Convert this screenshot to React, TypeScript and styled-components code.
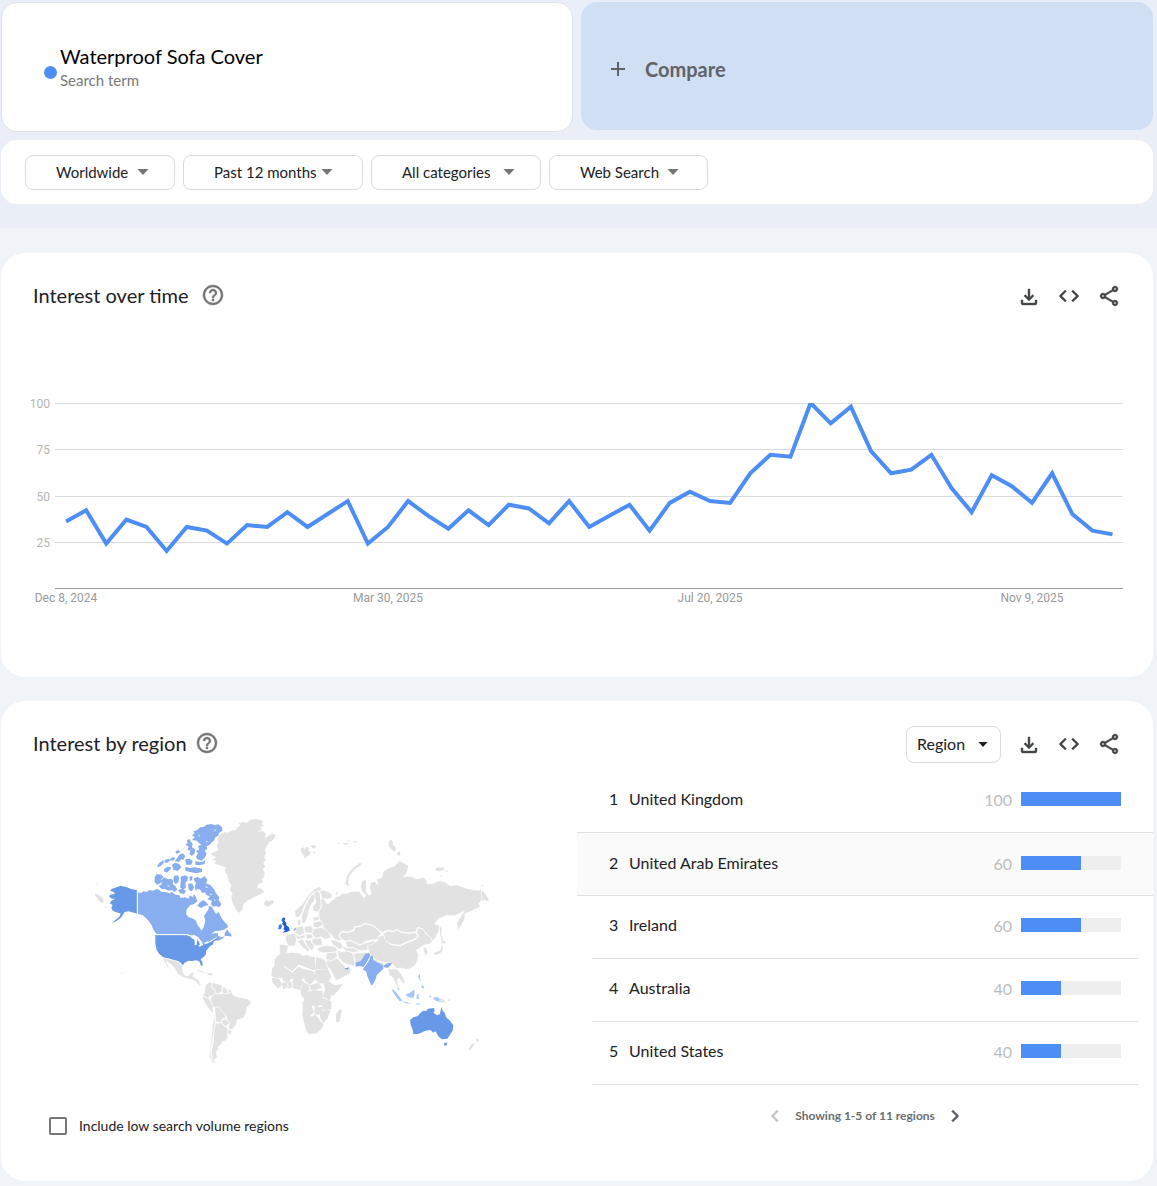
import React from "react";
import styled, { createGlobalStyle } from "styled-components";
import { MdAdd, MdHelpOutline, MdCode, MdOutlineShare, MdChevronLeft, MdChevronRight } from "react-icons/md";

const GlobalStyle = createGlobalStyle`
  * { box-sizing: border-box; }
  body {
    margin: 0;
    background: #f0f3f8;
    color: #202124;
    font-family: Lato, "Open Sans", sans-serif;
    font-size: 16px;
  }
  button, select, input { font: inherit; color: inherit; }
`;

const TopBand = styled.header`
  background: #e9eef7;
  padding: 2px 4px 24px 1px;
`;

const Terms = styled.div`
  display: grid;
  grid-template-columns: 1fr 1fr;
  gap: 8px;
  align-items: start;
`;

const TermCard = styled.section`
  display: flex;
  align-items: center;
  gap: 3px;
  height: 130px;
  padding: 2px 42px 0;
  background: #fff;
  border: 1px solid #dfe3ea;
  border-radius: 16px;
`;

const TermDot = styled.span`
  width: 13px;
  height: 13px;
  margin-top: 8px;
  border-radius: 50%;
  background: #4c8df6;
`;

const TermName = styled.h1`
  margin: 0;
  color: #000;
  font-size: 20px;
  font-weight: 400;
  line-height: 24px;
`;

const TermKind = styled.p`
  margin: 0;
  color: #77797c;
  font-size: 15px;
  line-height: 24px;
`;

const CompareButton = styled.button`
  display: flex;
  align-items: center;
  gap: 15px;
  height: 128px;
  padding: 6px 25px 0;
  border: 0;
  border-radius: 16px;
  background: #d1dff5;
  color: #5f6368;
  font-size: 20px;
  font-weight: 700;
`;

const FilterBar = styled.nav`
  display: flex;
  flex-wrap: wrap;
  align-items: center;
  gap: 8px;
  min-height: 64px;
  margin-top: 8px;
  padding: 0 24px;
  background: #fff;
  border-radius: 16px;
`;

const SelectBox = styled.label<{ $width: number; $pad: number; $height: number; $gap: number }>`
  display: flex;
  align-items: center;
  gap: ${(p) => p.$gap}px;
  width: ${(p) => p.$width}px;
  height: ${(p) => p.$height}px;
  padding-left: ${(p) => p.$pad}px;
  border: 1px solid #dadce0;
  border-radius: 8px;
  background: #fff;
`;

const SelectField = styled.select<{ $size: number }>`
  appearance: none;
  padding: 0;
  border: 0;
  background: transparent;
  font-size: ${(p) => p.$size}px;
  line-height: 20px;
  cursor: pointer;
`;

const Main = styled.main`
  display: flex;
  flex-direction: column;
  gap: 24px;
  padding: 25px 4px 5px 1px;
`;

const Card = styled.section`
  background: #fff;
  border-radius: 24px;
  padding: 24px 0 45px;
`;

const CardHeader = styled.div`
  display: flex;
  align-items: center;
  justify-content: space-between;
  height: 38px;
  padding: 0 32px;
`;

const Heading = styled.div<{ $gap: number }>`
  display: flex;
  align-items: center;
  gap: ${(p) => p.$gap}px;
  padding-bottom: 2px;
`;

const CardTitle = styled.h2`
  margin: 0;
  font-size: 20px;
  font-weight: 400;
  line-height: 24px;
`;

const Actions = styled.div`
  display: flex;
  align-items: center;
  gap: 16px;
`;

const IconButton = styled.button<{ $color?: string }>`
  display: flex;
  padding: 0;
  border: 0;
  background: none;
  color: ${(p) => p.$color ?? "#444746"};
  cursor: pointer;
  path:not([fill="none"]) {
    stroke: currentColor;
    stroke-width: 0.4px;
  }
`;

const ChartSvg = styled.svg`
  display: block;
  width: 100%;
  height: auto;
  font-family: Roboto, sans-serif;
  font-size: 12px;
`;

const RegionBody = styled.div`
  display: grid;
  grid-template-columns: 1fr 1fr;
`;

const MapColumn = styled.div`
  padding: 47px 48px 0;
`;

const MapSvg = styled.svg`
  display: block;
  width: 410px;
  max-width: 100%;
  height: auto;
  margin: 0 auto 46px 41px;
`;

const CheckLabel = styled.label`
  display: flex;
  align-items: center;
  gap: 12px;
  font-size: 14px;
  line-height: 20px;
`;

const CheckInput = styled.input`
  appearance: none;
  width: 18px;
  height: 18px;
  margin: 0;
  border: 2px solid #747775;
  border-radius: 2px;
`;

const RankList = styled.ol`
  margin: 7px 0 0;
  padding: 0;
  list-style: none;
`;

const RankRow = styled.li<{ $active: boolean }>`
  display: grid;
  grid-template-columns: 20px 1fr 40px 100px;
  align-items: center;
  height: 63px;
  margin: ${(p) => (p.$active ? "0" : "0 15px")};
  padding: ${(p) => (p.$active ? "0 32px 2px" : "0 17px 4px")};
  border-bottom: 1px solid #e0e0e0;
  background: ${(p) => (p.$active ? "#fafafa" : "transparent")};
  &:first-child {
    margin: 0;
    padding: 0 32px 4px;
  }
`;

const RankText = styled.span`
  padding-bottom: 2px;
`;

const Score = styled.span`
  padding-right: 9px;
  color: #bdbdbd;
  text-align: right;
`;

const Track = styled.div`
  height: 14px;
  background: #eee;
`;

const Fill = styled.div`
  height: 100%;
  background: #4c8df6;
`;

const Pager = styled.div`
  display: flex;
  align-items: center;
  justify-content: center;
  gap: 8px;
  margin-top: 19px;
  color: #6b6d70;
  font-size: 12px;
  font-weight: 700;
  line-height: 24px;
`;

const Caret = ({ color, width = 12 }: { color: string; width?: number }) => (
  <svg width={width} height={width / 2} viewBox="0 0 12 6" fill={color} aria-hidden="true">
    <path d="M0.5 0h11L6 6z" />
  </svg>
);

const DownloadIcon = () => (
  <svg width="24" height="24" viewBox="0 0 24 24" fill="currentColor" aria-hidden="true">
    <path d="M12 17l-5-5 1.4-1.45 2.6 2.6V5h2v8.15l2.6-2.6L17 12zM6 21q-.825 0-1.412-.587T4 19v-3h2v3h12v-3h2v3q0 .825-.587 1.413T18 21z" />
  </svg>
);

const CardActions = () => (
  <>
    <IconButton aria-label="Download CSV"><DownloadIcon /></IconButton>
    <IconButton aria-label="Embed"><MdCode size={24} /></IconButton>
    <IconButton aria-label="Share"><MdOutlineShare size={24} /></IconButton>
  </>
);

const filters = [
  { label: "Location", value: "Worldwide", width: 150, gap: 8 },
  { label: "Time range", value: "Past 12 months", width: 180, gap: 4 },
  { label: "Category", value: "All categories", width: 170, gap: 12 },
  { label: "Search type", value: "Web Search", width: 159, gap: 8 },
];

const values = [
  36, 42, 24, 37, 33, 20, 33, 31, 24, 34, 33, 41, 33, 40, 47, 24, 33, 47, 39, 32, 42, 34, 45, 43, 35, 47, 33, 39, 45,
  31, 46, 52, 47, 46, 62, 72, 71, 100, 89, 98, 74, 62, 64, 72, 54, 41, 61, 55, 46, 62, 40, 31, 29,
];

const dates = ["Dec 8, 2024", "Mar 30, 2025", "Jul 20, 2025", "Nov 9, 2025"];

const yFor = (v: number) => 228 - v * 1.85;
const xFor = (i: number) => 65 + i * 20.125;

const TrendChart = () => (
  <ChartSvg viewBox="0 0 1152 317" role="img" aria-label="Interest over time">
    <defs>
      <clipPath id="plot"><rect x="54" y="43" width="1068" height="185" /></clipPath>
    </defs>
    {[100, 75, 50, 25].map((v) => (
      <g key={v}>
        <rect x="54" y={Math.round(yFor(v))} width="1068" height="1" transform="translate(0 45)" fill="#dadce0" />
        <text x="49" y={yFor(v) + 50} textAnchor="end" fill="#b5b5b5">{v}</text>
      </g>
    ))}
    <rect x="54" y="273" width="1068" height="1" fill="#9a9a9a" />
    <g transform="translate(0 45)">
      <polyline
        clipPath="url(#plot)"
        points={values.map((v, i) => `${xFor(i)},${yFor(v)}`).join(" ")}
        fill="none"
        stroke="#4c8df6"
        strokeWidth="4"
      />
    </g>
    {dates.map((d, i) => (
      <text key={d} x={xFor(i * 16)} y="287" textAnchor="middle" fill="#999">{d}</text>
    ))}
  </ChartSvg>
);

const WorldMap = () => (
  <MapSvg viewBox="0 0 1230 780" role="img" aria-label="Interest by region map" strokeLinejoin="round">
    <g fill="#e2e2e2">
      {/* Greenland, Iceland */}
      <path d="M362 132L385 120 380 108 386 96 382 86 390 74 404 66 412 68 430 60 436 62 444 50 452 48 446 40 460 36 470 38 480 30 496 27 512 30 520 36 512 42 524 46 510 52 518 58 500 64 520 64 528 72 524 84 536 78 546 70 557 76 552 86 544 94 534 96 538 100 530 108 524 120 528 130 522 142 528 150 520 160 526 170 518 178 524 190 522 202 514 208 520 216 506 222 500 232 518 238 522 246 504 256 484 266 470 274 460 284 456 300 448 308 440 302 434 290 428 280 424 262 428 250 420 240 424 226 416 212 412 196 404 184 408 172 396 168 384 164 372 160 380 154 368 150 378 142Z" />
      <path d="M522 278L528 270 536 274 548 270 552 278 542 286 532 290 524 286Z" />
      {/* Aleutians and Pacific specks */}
      <path d="M16 250l8 4 12 8 6 10-6 8-8-6-6-10-6-6zM44 286l6 4-4 3zM94 486l3 2-2 6zM16 222l6 2-4 3z" />
    </g>
    <g fill="#89aef0">
      {/* Canadian mainland */}
      <path d="M143 246L152 250 160 244 170 246 178 240 190 242 200 237 208 240 214 246 228 246 238 250 246 246 256 254 268 256 272 264 286 262 296 266 300 256 308 262 312 252 318 262 322 274 312 282 300 286 290 298 288 312 296 322 310 326 318 332 322 344 330 354 334 362 340 354 344 340 346 330 342 318 350 306 356 296 356 288 366 290 372 302 378 312 386 306 390 314 396 326 404 336 412 344 414 352 400 360 388 362 374 364 362 374 372 370 384 370 384 378 396 382 404 378 398 386 384 392 380 384 368 390 350 398 340 406 330 408 334 398 328 386 314 378 300 376 292 373 200 373 192 362 186 350 180 340 170 326 158 316 143 311Z" />
      <path d="M404 370L412 358 416 366 424 372 424 380 416 378 404 378Z" />
      {/* Ellesmere and Axel Heiberg */}
      <path d="M306 76L314 70 310 64 322 60 330 52 342 50 350 44 364 42 374 45 386 43 396 52 397 62 388 68 384 78 376 82 372 92 364 98 358 106 350 108 352 116 344 122 350 130 346 140 336 152 322 148 318 140 324 130 318 124 328 118 324 108 334 104 326 98 320 92 306 90 314 82Z" />
      <path d="M290 92L298 86 302 94 308 102 306 112 316 118 314 130 306 138 298 132 302 122 292 120 296 110 286 104 294 98Z" />
      {/* Queen Elizabeth and Parry islands */}
      <path d="M256 124L266 120 270 126 260 132ZM268 134L278 130 286 138 280 150 274 148 266 156 254 154 260 146ZM246 142L256 144 250 152 238 150ZM202 168L208 158 220 150 222 158 212 168 204 172ZM224 150L236 146 240 152 232 158 224 158ZM222 178L232 170 244 172 240 180 230 188 222 184ZM246 164L256 158 268 162 274 172 264 182 250 180ZM286 148L300 146 308 154 304 164 288 164ZM286 170L300 174 314 172 336 176 336 186 318 190 300 186 286 182ZM316 154L336 156 346 150 344 162 328 166 316 164Z" />
      {/* Banks, Victoria and neighbours */}
      <path d="M194 202L200 192 214 194 220 200 214 208 212 220 200 224 194 216Z" />
      <path d="M212 212L222 202 234 208 244 206 250 214 248 222 256 228 262 238 254 246 246 240 236 242 226 238 214 236 206 228 216 222Z" />
      <path d="M252 198L264 196 268 206 264 218 256 222 250 212ZM272 200L284 196 294 200 292 212 286 218 288 232 280 240 270 232 272 218ZM264 240L276 236 288 242 282 252 270 250ZM298 200L308 198 306 210 300 214ZM294 222L306 220 312 232 306 244 296 240Z" />
      {/* Baffin, Southampton */}
      <path d="M310 206L322 200 332 206 344 198 352 210 348 220 362 226 372 238 378 250 388 262 386 270 394 282 388 292 378 288 370 290 362 282 366 272 352 268 360 260 348 254 344 246 336 250 332 240 322 236 318 244 314 230 318 220Z" />
      <path d="M328 278L340 270 350 278 356 286 342 288 334 294 322 288Z" />
    </g>
    <g fill="#fff">
      <path d="M322 74l10 2-4 4zM350 92l6 2-10 4zM374 58l6 2-8 5zM232 224l10 4-8 2zM348 228l8 6-10 0zM362 250l6 4-10 2zM372 266l6 6-6 0z" opacity=".6" />
    </g>
    <g fill="#6898e8">
      {/* Alaska and the lower 48 */}
      <path d="M142 240L126 238 110 232 92 227 80 232 66 236 60 242 72 246 74 252 60 254 58 260 66 266 76 266 64 272 60 280 68 286 64 292 66 300 76 306 84 308 92 310 88 320 76 330 66 338 78 334 92 324 98 316 104 306 116 304 124 306 142 311Z" />
      <path d="M196 374L290 374 306 380 322 384 330 396 330 408 346 402 364 394 380 384 385 390 372 394 368 404 360 408 354 416 348 422 348 432 340 442 332 448 338 460 337 468 333 467 328 454 318 451 306 453 296 452 284 458 278 466 272 458 262 452 250 452 238 446 220 442 208 432 200 420 196 402Z" />
    </g>
    <path d="M142 240v72l16 6 14 12 14 20M198 374h92l10 4 14 0" fill="none" stroke="#fff" strokeWidth="3" />
    <path d="M300 380l14-5 14 9-6 4-2 16-6 2 0-16-8-5zM322 386l10 4 6 10-8 4-3-8zM326 406l12-5 2 4-12 5zM342 399l10-5 3 3-10 5z" fill="#fff" />
    <path d="M350 400L368 390 380 382" fill="none" stroke="#fff" strokeWidth="3" />
    <g transform="translate(0 360)" fill="#e2e2e2" stroke="#fff" strokeWidth="2">
      {/* Mexico to Panama */}
      <path d="M218 84L240 88 262 94 272 102 278 110 278 124 284 136 294 138 304 128 314 126 308 138 316 144 328 152 330 162 340 168 328 166 314 152 300 148 280 142 262 132 256 118 246 106 236 98 228 92 242 122 230 108Z" />
      <path d="M318 120l16 2 14 7-14-2zM352 129l18 2-4 5-12-2z" stroke="none" />
      {/* South America */}
      <path d="M346 166l12-10 10 4-4 12 12 8 2 14-16 4-12 10-4-8-8-2 6-12z" />
      <path d="M368 158l26 6 6 8-6 14-16 8-4-16-10-8zM396 168l14 8 6 12-10 4-10-4zM414 176l12 6-2 8-10 0z" />
      <path d="M336 198l12 4 8 2 6 12 8 8-2 12 4 14-12-8-12-18-8-14z" />
      <path d="M360 206L372 192 392 192 400 190 410 192 424 186 430 196 446 202 470 206 483 214 480 224 470 232 468 252 460 264 442 270 438 284 426 300 414 292 420 282 412 272 408 258 394 248 386 236 374 234 366 224Z" />
      <path d="M374 234L386 230 394 242 406 252 408 266 398 266 392 278 378 276 376 256ZM394 272L408 266 418 278 412 288 402 288Z" />
      <path d="M376 280L392 278 406 290 414 294 412 308 414 322 406 332 396 336 392 346 384 350 386 358 378 366 382 380 374 388 376 398 366 386 364 364 370 334 372 300Z" />
      <path d="M372 250L376 274 372 306 366 336 362 360 364 384 374 398 382 404 366 398 358 380 360 350 364 320 368 286ZM414 296L426 304 422 314 412 310Z" />
    </g>
    <g transform="translate(510 60)" fill="#e2e2e2">
      {/* Arctic Ocean islands */}
      <path d="M122 56l8-4 4 6 6-8 8 4-4 8 8 4-4 10-8 2-4 10-6-12-6-8zM150 48l12-3 8 5-10 6zM158 68l6-4 2 8zM232 38l8 0-4 4zM248 40l14-2 4 4-12 3zM262 30l8 2-6 4zM278 34l14-2-6 6z" />
      <path d="M386 36L392 28 398 34 398 44 406 50 408 60 400 66 396 58 388 52ZM410 68L418 64 422 74 414 78ZM526 116l10-6 4 4 12-2 2 6-14 6-12-2zM556 120l12 4-10 1zM664 164l8 2-6 2zM538 136l10 2-8 3zM226 190l8-4-2 8z" />
      <path d="M256 160L260 142 268 126 282 112 298 100 305 100 300 108 286 116 274 130 266 144 264 156 268 168 260 166Z" />
      <path d="M540 286L545 296 543 312 549 328 545 332 540 312Z" />
    </g>
    <g transform="translate(510 60)" fill="#e2e2e2" stroke="#fff" strokeWidth="2">
      {/* Russia */}
      <path d="M178 182L190 180 206 186 216 194 214 204 202 208 190 204 196 214 204 222 214 212 222 208 228 200 240 198 246 190 258 192 268 186 284 184 298 184 306 196 312 204 318 196 304 184 302 168 306 152 318 148 320 168 318 184 326 196 334 190 328 174 332 158 344 154 354 166 350 148 366 142 370 124 386 114 404 108 418 92 434 100 446 108 440 130 430 140 450 138 470 146 492 142 500 152 502 162 520 160 536 152 556 156 570 168 590 164 606 170 624 176 644 180 664 180 676 190 686 206 686 216 674 210 664 212 656 220 662 232 644 238 630 246 616 250 614 266 606 284 594 300 590 280 600 262 612 244 600 250 582 258 560 256 536 266 524 282 540 288 536 304 526 324 518 334 512 322 498 310 488 296 472 292 468 306 448 308 424 306 410 298 398 304 382 300 366 308 350 294 336 284 316 280 300 288 284 290 280 300 262 306 244 304 236 316 244 330 238 334 222 326 214 314 200 306 192 296 186 280 176 264 176 246 184 232 182 214 186 200Z" />
      <path d="M664 180V212" fill="none" />
      {/* Scandinavia */}
      <path d="M106 258L104 244 116 232 128 222 138 206 150 190 164 176 178 170 188 178 170 184 154 192 144 208 134 226 128 244 122 256 112 264Z" />
      <path d="M124 258L130 244 136 228 146 208 156 192 167 194 163 212 152 226 148 240 144 256 136 278 126 280Z" />
      <path d="M160 244L157 230 168 218 164 200 160 188 172 184 180 190 182 212 184 230 174 246Z" />
      {/* Central and Eastern Europe */}
      <path d="M108 292L130 288 134 310 118 318 106 308ZM112 270L122 268 122 286 112 286ZM132 292L152 286 160 298 156 310 134 308ZM158 262L178 258 178 270 160 274ZM160 276L182 272 190 284 174 294 160 290ZM160 296L184 292 206 306 214 322 196 328 182 320 168 326 156 312ZM76 316L106 308 110 330 104 348 84 348 78 332ZM58 342L86 346 82 364 78 380 60 376ZM106 312L118 320 134 312 136 324 110 328ZM136 312L156 312 160 324 140 328ZM158 326L184 324 188 346 168 348 154 338ZM112 332L128 328 140 348 150 358 144 366 126 350ZM132 330L152 330 164 350 156 362 144 350Z" />
      {/* Caucasus */}
      <path d="M210 330L226 330 242 338 252 352 240 358 220 346Z" />
      {/* Kazakhstan, Central Asia, Mongolia */}
      <path d="M244 306L262 308 282 302 284 292 300 290 316 282 336 286 350 296 364 310 356 318 358 328 340 330 322 332 312 338 300 344 284 336 270 330 256 334 246 328 238 318Z" />
      <path d="M256 336L270 332 284 338 300 346 314 340 340 332 350 338 332 348 318 362 298 362 278 352 262 354Z" />
      <path d="M368 312L384 302 398 306 410 300 424 308 448 310 466 308 474 318 462 328 440 336 420 346 392 342 376 332Z" />
    </g>
    <g transform="translate(510 360)" fill="#e2e2e2" stroke="#fff" strokeWidth="2">
      {/* Turkey to Afghanistan */}
      <path d="M172 54L188 48 204 46 224 50 232 58 228 66 206 68 190 68 174 64ZM202 68L230 66 232 80 218 92 204 96 196 84ZM198 88L214 92 230 84 244 98 252 106 258 116 266 112 274 120 268 132 250 142 230 152 222 140 212 120 200 104ZM232 60L246 66 260 62 276 68 282 78 286 100 282 108 266 104 250 98 236 84ZM280 70L300 68 322 66 314 80 304 88 298 98 286 100ZM246 48L262 54 280 54 300 64 280 68 256 62Z" />
      {/* China, Korea, Japan, mainland South-east Asia */}
      <path d="M322 48L336 44 350 34 358 20 370 14 378 34 394 44 420 48 442 38 464 30 476 18 470 8 474-6 488-4 498 12 512 22 518 34 508 42 490 46 478 56 468 60 476 74 472 92 466 106 450 116 436 118 424 114 410 116 402 106 390 98 374 98 352 92 338 82 328 68Z" />
      <path d="M490 50L500 54 504 72 496 76 490 62ZM520 70L530 64 540 60 546 44 550 46 548 64 538 72 524 76ZM542 30L556 32 558 40 546 42Z" />
      <path d="M384 112L392 118 402 116 412 118 422 130 434 150 434 162 426 158 418 144 412 150 414 166 420 182 412 176 406 158 398 142 388 136Z" />
      <path d="M340 84L356 94 374 100 372 106 354 102 340 94Z" />
    </g>
    <g transform="translate(510 360)" fill="#e2e2e2">
      {/* Africa */}
      <path d="M44 88l12-14 18-2 12 6-8 16-22 12-14 14zM56 76l36-8 22 2 2 34-20 20-36-26 6-10zM114 68l16 10 10-4 12 6 12 0 2 40-10 0-28-12-14-6zM168 82l20 4 8 8 8 24-38 0zM36 116l14-14 22 0-2 42-24 0-12-6zM70 108l30 22-4 14-12 16-16-10 0-14zM100 124l18-14 16 10 0 24-26 8-12-6zM134 116l30 10 0 24-14 16-16-14zM166 120l38-2 10 22-12 20-26 0-12-14zM34 144l24 2 8 18-12 12-16-18zM64 158l16-2 4 16-14 6zM84 158l10-4 2 18-10 4zM98 150l26-2 6 8-12 24-20-6zM130 156l18 10 0 16-18 6-10-6zM150 166l24-8 12 14-20 8-14 0zM196 150l18 8 8 8 26-4-12 18-18 18-22-18-4-16zM194 180l22 4-6 28-22-12zM148 184l16-4 24 4 0 34-18 14-20-6-20-8 4-20zM122 184l24 0-12 22-10-8zM186 204l28 10 0 24-20 2-14-22zM128 214l22 6 6 12 8 14-14 10-22-4zM164 232l20-2 10 4-14 18-16 4zM126 252l24 2 6 12-8 20-14 0zM150 262l16-8 14 16-20 14-12 2zM178 250l20-12 14 4-10 24-12 14-8-14zM134 282l24 2 20-14 14 14-8 12-16 14-18 2-10-6zM228 252l12-16 6 6-8 34-10 0z" />
    </g>
    <g transform="translate(510 360)">
      {/* New Guinea (east), New Zealand, Sri Lanka */}
      <path d="M538 204L550 208 560 218 552 216 546 218 538 216ZM562 210L570 208 568 214ZM624 358L634 344 644 340 636 354 630 360ZM648 334L650 324 656 330 652 336ZM344 166l4 4-4 5z" fill="#e2e2e2" />
      {/* Pakistan, India, Bangladesh */}
      <path d="M286 98L300 94 308 84 316 72 326 68 332 76 324 90 316 104 310 112 300 108 288 110Z" fill="#89aef0" />
      <path d="M310 114L320 102 328 88 328 76 338 78 340 90 354 98 368 104 370 116 360 126 350 136 346 150 338 164 334 166 328 154 322 138 318 124 310 120ZM368 108L382 100 396 98 390 108 382 114 374 112Z" fill="#89aef0" />
      <path d="M333 74L325 92 316 106 308 114" fill="none" stroke="#fff" strokeWidth="2" />
      <path d="M254 116l8-2 4-5-2 9-8 0z" fill="#4d86e6" />
      {/* Indonesia, Malaysia, Philippines */}
      <path d="M394 176L404 182 414 194 424 208 426 214 418 212 408 200 400 188ZM424 214L440 216 452 221 438 220ZM438 192L448 190 456 184 462 178 464 190 460 204 446 202 440 198ZM470 196L478 190 474 198 478 206 470 208ZM474 138L480 132 480 144 484 154 478 148ZM486 164L492 170 490 176 484 172ZM508 196L514 200 510 204ZM520 202L530 202 538 204 538 216 528 212 522 208ZM468 220L484 222 470 224ZM410 172l8 6-2 4z" fill="#a6c5f8" />
      {/* Australia and Tasmania */}
      <path d="M450 270L460 262 474 258 480 250 490 242 500 242 504 236 522 234 524 242 520 248 532 256 540 252 544 230 548 242 554 248 558 262 570 272 580 286 578 302 570 314 562 326 546 328 536 320 530 310 526 304 520 308 512 300 496 302 484 308 474 312 460 312 458 300 452 284ZM552 338L562 338 560 346 554 348Z" fill="#6898e8" />
    </g>
    {/* British Isles */}
    <g transform="translate(510 60)" fill="#1c5bd0">
      <path d="M66 266L72 262 76 266 73 272 79 278 79 286 87 292 89 302 79 306 68 308 75 301 70 297 73 291 70 285 66 281 69 277 65 272Z" />
      <path d="M56 286L64 282 66 290 62 298 54 298 56 292Z" fill="#3f7ae0" />
      <path d="M100 300l6-8 2 5-5 7z" fill="#89aef0" />
    </g>
  </MapSvg>
);

const regions = [
  { name: "United Kingdom", score: 100 },
  { name: "United Arab Emirates", score: 60 },
  { name: "Ireland", score: 60 },
  { name: "Australia", score: 40 },
  { name: "United States", score: 40 },
];

export default function App() {
  return (
    <>
      <GlobalStyle />
      <TopBand>
        <Terms>
          <TermCard>
            <TermDot />
            <div>
              <TermName>Waterproof Sofa Cover</TermName>
              <TermKind>Search term</TermKind>
            </div>
          </TermCard>
          <CompareButton><MdAdd size={24} />Compare</CompareButton>
        </Terms>
        <FilterBar aria-label="Filters">
          {filters.map((f) => (
            <SelectBox key={f.label} $width={f.width} $pad={30} $height={35} $gap={f.gap}>
              <SelectField $size={15} aria-label={f.label}><option>{f.value}</option></SelectField>
              <Caret color="#757575" />
            </SelectBox>
          ))}
        </FilterBar>
      </TopBand>
      <Main>
        <Card>
          <CardHeader>
            <Heading $gap={12}>
              <CardTitle>Interest over time</CardTitle>
              <IconButton aria-label="Help" $color="#757575"><MdHelpOutline size={24} /></IconButton>
            </Heading>
            <Actions><CardActions /></Actions>
          </CardHeader>
          <TrendChart />
        </Card>
        <Card>
          <CardHeader>
            <Heading $gap={8}>
              <CardTitle>Interest by region</CardTitle>
              <IconButton aria-label="Help" $color="#757575"><MdHelpOutline size={24} /></IconButton>
            </Heading>
            <Actions>
              <SelectBox $width={95} $pad={10} $height={37} $gap={12}>
                <SelectField $size={16} aria-label="Resolution"><option>Region</option></SelectField>
                <Caret color="#202124" width={10} />
              </SelectBox>
              <CardActions />
            </Actions>
          </CardHeader>
          <RegionBody>
            <MapColumn>
              <WorldMap />
              <CheckLabel><CheckInput type="checkbox" />Include low search volume regions</CheckLabel>
            </MapColumn>
            <div>
              <RankList>
                {regions.map((r, i) => (
                  <RankRow key={r.name} $active={i === 1}>
                    <RankText>{i + 1}</RankText>
                    <RankText>{r.name}</RankText>
                    <Score>{r.score}</Score>
                    <Track><Fill style={{ width: `${r.score}%` }} /></Track>
                  </RankRow>
                ))}
              </RankList>
              <Pager>
                <IconButton aria-label="Previous" $color="#c4c7c5"><MdChevronLeft size={24} /></IconButton>
                <span>Showing 1-5 of 11 regions</span>
                <IconButton aria-label="Next" $color="#5f6368"><MdChevronRight size={24} /></IconButton>
              </Pager>
            </div>
          </RegionBody>
        </Card>
      </Main>
    </>
  );
}
